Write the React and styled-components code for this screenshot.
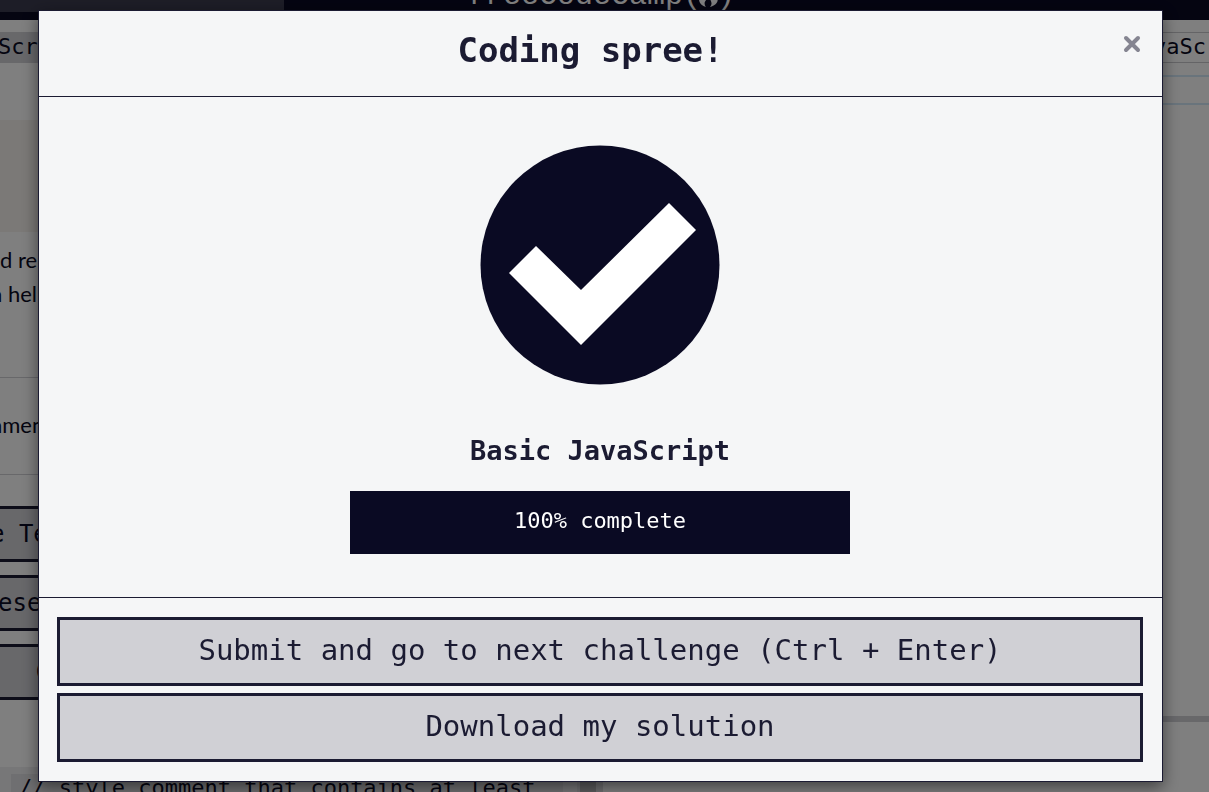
import React from "react";
import styled, { createGlobalStyle } from "styled-components";

const mono = '"DejaVu Sans Mono", "Liberation Mono", monospace';
const ink = "#1b1b32";
const navy = "#0a0a23";

const GlobalStyle = createGlobalStyle`
  *, *::before, *::after { box-sizing: border-box; }
  body {
    margin: 0;
    height: 100vh;
    overflow: hidden;
    background: #fff;
    color: ${navy};
    font-family: Lato, sans-serif;
  }
  #root { height: 100%; }
`;

const Page = styled.div`
  display: flex;
  flex-direction: column;
  height: 100vh;
  overflow: hidden;
`;

const NavBar = styled.header`
  display: grid;
  grid-template-columns: 284px 1fr;
  height: 20px;
  flex: none;
  overflow: hidden;
  background: ${navy};
`;

const SearchField = styled.div`
  height: 12px;
  background: #3b3b4f;
`;

const Brand = styled.a`
  display: flex;
  align-items: center;
  height: 34px;
  margin-top: -21px;
  padding-left: 183px;
  color: #fff;
  font: 30px/34px "Liberation Mono", monospace;
  text-decoration: none;
`;

const Flame = styled.svg`
  width: 22px;
  height: 26px;
  margin: 0 -3px;
`;

const Panes = styled.div`
  display: flex;
  flex: 1;
  min-height: 0;
`;

const LessonPane = styled.section`
  display: flex;
  flex-direction: column;
  width: 577px;
  flex: none;
  overflow: hidden;
`;

const Tab = styled.div`
  height: 31px;
  margin-top: 12px;
  flex: none;
  background: #d0d0d5;
  font: 22px/30px ${mono};
  text-indent: -2px;
`;

const Banner = styled.div`
  height: 112px;
  margin-top: 57px;
  flex: none;
  background: #f7f3ee;
`;

const Prose = styled.div`
  height: 146px;
  flex: none;
  padding-top: 11px;
  border-bottom: 1px solid #d0d0d5;
`;

const Hint = styled.div`
  height: 97px;
  flex: none;
  padding-top: 30px;
  border-bottom: 1px solid #d0d0d5;
`;

const Line = styled.p`
  margin: 0;
  font-size: 22px;
  line-height: 34px;
  white-space: pre;
  text-indent: ${(p) => p.$indent || 0}px;
`;

const ActionList = styled.div`
  display: flex;
  flex-direction: column;
  flex: none;
  gap: 13px;
  padding-top: 31px;
`;

const LessonAction = styled.button`
  height: 56px;
  padding: 0;
  border: solid ${ink};
  border-width: 3px 0;
  background: #d0d0d5;
  color: ${navy};
  font: 24px/50px ${mono};
  text-align: left;
  text-indent: ${(p) => p.$indent}px;
  white-space: pre;
`;

const Output = styled.div`
  flex: 1;
  margin-top: 67px;
  padding: 7px 0 0 11px;
  background: #eeeef0;
`;

const Code = styled.code`
  display: block;
  width: 552px;
  padding-left: 8px;
  background: #dfdfe2;
  font: 22px/28px ${mono};
  white-space: pre;
`;

const Gutter = styled.div`
  width: 26px;
  flex: none;
  border-left: 3px solid #dfdfe2;
  background: linear-gradient(to right, #b8b8bb 16px, #dfdfe2 16px);
`;

const EditorPane = styled.section`
  display: flex;
  flex-direction: column;
  flex: 1;
  min-width: 0;
`;

const EditorTab = styled.div`
  height: 31px;
  flex: none;
  margin-top: 12px;
  padding-left: 550px;
  border: solid #c8c8cc;
  border-width: 1px 0;
  overflow: hidden;
  font: 22px/28px ${mono};
`;

const CurrentLine = styled.div`
  height: 30px;
  flex: none;
  margin-top: 12px;
  border: solid #d3e8f8;
  border-width: 2px 0;
`;

const ConsolePane = styled.div`
  height: 76px;
  margin-top: auto;
  border-top: 6px solid #d0d0d5;
`;

const Backdrop = styled.div`
  position: fixed;
  inset: 0;
  padding: 10px 46px 10px 38px;
  background: rgba(0, 0, 0, 0.5);
`;

const Dialog = styled.div`
  border: 1px solid ${ink};
  background: #f5f6f7;
  color: ${ink};
  font-family: ${mono};
  box-shadow: 0 5px 15px rgba(0, 0, 0, 0.5);
`;

const DialogHeader = styled.header`
  display: grid;
  grid-template-columns: 20px 1fr 40px;
  height: 86px;
  padding: 0 10px;
  border-bottom: 1px solid ${ink};
`;

const Title = styled.h1`
  grid-column: 2;
  margin: 0;
  font-size: 34px;
  line-height: 78px;
  text-align: center;
`;

const CloseButton = styled.button`
  display: flex;
  align-items: center;
  justify-content: center;
  height: 66px;
  padding: 0;
  border: 0;
  background: none;
  color: #858591;
`;

const DialogBody = styled.div`
  display: flex;
  flex-direction: column;
  align-items: center;
  padding: 48px 19px 43px 18px;
  border-bottom: 1px solid ${ink};
`;

const CheckMark = styled.svg`
  width: 240px;
  height: 240px;
`;

const BlockName = styled.h2`
  margin: 46px 0 20px;
  font-size: 27px;
  line-height: 40px;
`;

const Progress = styled.div`
  width: 500px;
  max-width: 100%;
  height: 63px;
  background: ${navy};
  color: #fff;
  font-size: 22px;
  line-height: 60px;
  text-align: center;
`;

const DialogFooter = styled.footer`
  display: flex;
  flex-direction: column;
  gap: 7px;
  padding: 19px 19px 19px 18px;
`;

const DialogButton = styled.button`
  height: 69px;
  padding: 0 0 3px;
  border: 3px solid ${ink};
  background: #d0d0d5;
  color: ${ink};
  font: 29px/60px ${mono};
`;

export default function App() {
  return (
    <>
      <GlobalStyle />
      <Page>
        <NavBar>
          <SearchField />
          <Brand href="#">
            freeCodeCamp(
            <Flame viewBox="0 0 22 26" aria-hidden="true">
              <path
                d="M10 1C8 7 1 10 1 16c0 4 3 7 7 8-2-3-2-5 1-8l1-5zM10 1c6 4 5 7 7 9 5 6 3 12-5 14 2-3 2-4 0-8l-2-5z"
                fill="currentColor"
              />
            </Flame>
            )
          </Brand>
        </NavBar>
        <Panes>
          <LessonPane>
            <Tab>Scri</Tab>
            <Banner />
            <Prose>
              <Line>d re</Line>
              <Line $indent={-10}>n hel</Line>
            </Prose>
            <Hint>
              <Line $indent={-10}>nmen</Line>
            </Hint>
            <ActionList>
              <LessonAction $indent={-10}>e Te</LessonAction>
              <LessonAction $indent={-2}>ese</LessonAction>
              <LessonAction $indent={36}>G</LessonAction>
            </ActionList>
            <Output>
              <Code>// style comment that contains at least</Code>
            </Output>
          </LessonPane>
          <Gutter />
          <EditorPane>
            <EditorTab>vaScr</EditorTab>
            <CurrentLine />
            <ConsolePane />
          </EditorPane>
        </Panes>
      </Page>
      <Backdrop>
        <Dialog role="dialog" aria-modal="true" aria-labelledby="dialog-title">
          <DialogHeader>
            <Title id="dialog-title">Coding spree!</Title>
            <CloseButton type="button" aria-label="Close">
              <svg width="18" height="18" viewBox="0 0 18 18" aria-hidden="true">
                <path
                  d="M3 3l12 12M15 3L3 15"
                  stroke="currentColor"
                  strokeWidth="4"
                  strokeLinecap="round"
                />
              </svg>
            </CloseButton>
          </DialogHeader>
          <DialogBody>
            <CheckMark viewBox="0 0 240 240" role="img" aria-label="Passed">
              <circle cx="120" cy="120" r="119.5" fill={navy} />
              <path d="M29 128L56 101L101 145L189 58L216 85L101 200Z" fill="#fff" />
            </CheckMark>
            <BlockName>Basic JavaScript</BlockName>
            <Progress>100% complete</Progress>
          </DialogBody>
          <DialogFooter>
            <DialogButton type="button">
              Submit and go to next challenge (Ctrl + Enter)
            </DialogButton>
            <DialogButton type="button">Download my solution</DialogButton>
          </DialogFooter>
        </Dialog>
      </Backdrop>
    </>
  );
}
